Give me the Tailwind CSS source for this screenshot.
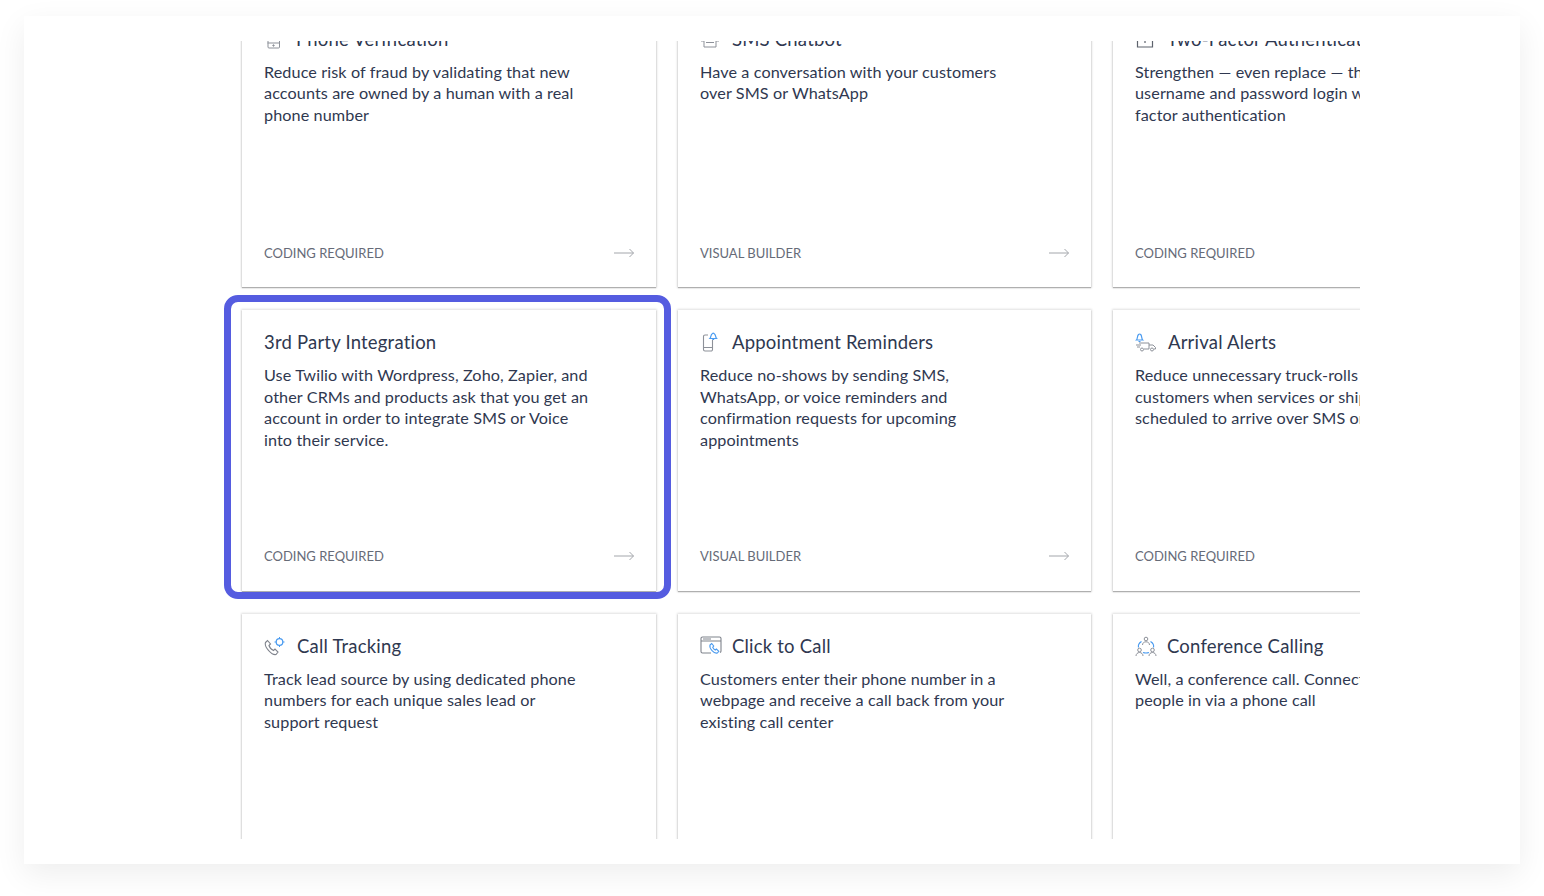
<!doctype html>
<html>
<head>
<meta charset="utf-8">
<script src="https://cdn.jsdelivr.net/npm/@tailwindcss/browser@4"></script>
</head>
<body class="bg-white">
<div class="w-[1544px] h-[896px] pt-4 pl-6 overflow-hidden bg-white font-['Lato',sans-serif] text-[#2f3850]">
  <div class="relative w-[1496px] h-[848px] bg-white pt-[25px] pl-[216px] shadow-[0_10px_30px_rgba(0,0,0,0.07)]">
    <div class="w-[1120px] h-[798px] overflow-hidden">
      <div class="grid grid-cols-[414px_413px_414px] gap-x-[22px] gap-y-[23px] w-[1300px] pl-[2px] pt-[4px] -mt-[38.5px]">

        <!-- Row 1 -->
        <article class="flex flex-col h-[280.5px] pt-[20px] px-[22px] bg-white shadow-[0_1px_1px_rgba(0,0,0,0.25),0_0_2px_1px_rgba(0,0,0,0.12)]">
          <div class="flex items-center gap-3 h-6">
            <svg class="w-5 h-5 shrink-0" viewBox="0 0 20 20" fill="none" stroke="#8d9199" stroke-width="1"><path d="M5 3h9a1.500 1.500 0 0 1 1.500 1.500V18a1 1 0 0 1-1 1h-9.500a1 1 0 0 1-1-1V4.500A1.500 1.500 0 0 1 5 3z"/><path d="M3.500 14h12"/><circle cx="9.500" cy="16.500" r=".7" fill="#8d9199"/></svg>
            <h3 class="text-[18.5px] leading-6 font-normal tracking-[0.2px] whitespace-nowrap">Phone Verification</h3>
          </div>
          <p class="mt-[10.250px] text-[16.2px] leading-[21.5px] tracking-[0.1px] whitespace-nowrap">Reduce risk of fraud by validating that new<br>accounts are owned by a human with a real<br>phone number</p>
          <div class="mt-auto mb-[24.500px] flex items-center justify-between">
            <span class="text-[13px] leading-5 text-[#666b78]">CODING REQUIRED</span>
            <svg class="w-5 h-2.5" viewBox="0 0 20 10" fill="none" stroke="#a3a6ab" stroke-width="1"><path d="M0 5h19.500M15.500 1l4 4-4 4"/></svg>
          </div>
        </article>
        <article class="flex flex-col h-[280.5px] pt-[20px] px-[22px] bg-white shadow-[0_1px_1px_rgba(0,0,0,0.25),0_0_2px_1px_rgba(0,0,0,0.12)]">
          <div class="flex items-center gap-3 h-6">
            <svg class="w-5 h-5 shrink-0" viewBox="0 0 20 20" fill="none" stroke="#8d9199" stroke-width="1"><path d="M4 6h12v12H4zM1 9h3M16 9h3M1 12h3M16 12h3"/><path d="M6 13.500h8"/><circle cx="7" cy="9.500" r="1"/><circle cx="13" cy="9.500" r="1"/></svg>
            <h3 class="text-[18.5px] leading-6 font-normal tracking-[0.2px] whitespace-nowrap">SMS Chatbot</h3>
          </div>
          <p class="mt-[10.250px] text-[16.2px] leading-[21.5px] tracking-[0.1px] whitespace-nowrap">Have a conversation with your customers<br>over SMS or WhatsApp</p>
          <div class="mt-auto mb-[24.500px] flex items-center justify-between">
            <span class="text-[13px] leading-5 text-[#666b78]">VISUAL BUILDER</span>
            <svg class="w-5 h-2.5" viewBox="0 0 20 10" fill="none" stroke="#a3a6ab" stroke-width="1"><path d="M0 5h19.500M15.500 1l4 4-4 4"/></svg>
          </div>
        </article>
        <article class="flex flex-col h-[280.5px] pt-[20px] px-[22px] bg-white shadow-[0_1px_1px_rgba(0,0,0,0.25),0_0_2px_1px_rgba(0,0,0,0.12)]">
          <div class="flex items-center gap-3 h-6">
            <svg class="w-5 h-5 shrink-0" viewBox="0 0 20 20" fill="none" stroke="#5d626c" stroke-width="1.200"><path d="M2.500 3h15v15h-15z"/><path d="M10 9v5M10 6.500v1"/></svg>
            <h3 class="text-[18.5px] leading-6 font-normal tracking-[0.2px] whitespace-nowrap">Two-Factor Authentication</h3>
          </div>
          <p class="mt-[10.250px] text-[16.2px] leading-[21.5px] tracking-[0.1px] whitespace-nowrap">Strengthen — even replace — the<br>username and password login with two-<br>factor authentication</p>
          <div class="mt-auto mb-[24.500px] flex items-center justify-between">
            <span class="text-[13px] leading-5 text-[#666b78]">CODING REQUIRED</span>
            <svg class="w-5 h-2.5" viewBox="0 0 20 10" fill="none" stroke="#a3a6ab" stroke-width="1"><path d="M0 5h19.500M15.500 1l4 4-4 4"/></svg>
          </div>
        </article>

        <!-- Row 2 -->
        <article class="flex flex-col h-[280.5px] pt-[20px] px-[22px] bg-white shadow-[0_1px_1px_rgba(0,0,0,0.25),0_0_2px_1px_rgba(0,0,0,0.12)]">
          <div class="flex items-center gap-3 h-6">
            <h3 class="text-[18.5px] leading-6 font-normal tracking-[0.2px] whitespace-nowrap">3rd Party Integration</h3>
          </div>
          <p class="mt-[10.250px] text-[16.2px] leading-[21.5px] tracking-[0.1px] whitespace-nowrap">Use Twilio with Wordpress, Zoho, Zapier, and<br>other CRMs and products ask that you get an<br>account in order to integrate SMS or Voice<br>into their service.</p>
          <div class="mt-auto mb-[24.500px] flex items-center justify-between">
            <span class="text-[13px] leading-5 text-[#666b78]">CODING REQUIRED</span>
            <svg class="w-5 h-2.5" viewBox="0 0 20 10" fill="none" stroke="#a3a6ab" stroke-width="1"><path d="M0 5h19.500M15.500 1l4 4-4 4"/></svg>
          </div>
        </article>
        <article class="flex flex-col h-[280.5px] pt-[20px] px-[22px] bg-white shadow-[0_1px_1px_rgba(0,0,0,0.25),0_0_2px_1px_rgba(0,0,0,0.12)]">
          <div class="flex items-center gap-3 h-6">
            <svg class="w-5 h-5 shrink-0" viewBox="0 0 20 20" fill="none"><path d="M8 3H5A1.500 1.500 0 0 0 3.500 4.500v13A1.500 1.500 0 0 0 5 19h6a1.500 1.500 0 0 0 1.500-1.500V8M3.500 15.500h9" stroke="#8d9199" stroke-width="1.100"/><path d="M10 6.500c1-1 .5-4 2.500-5 .5-.5 1-.5 1.500 0 2 1 1.500 4 2.500 5z" fill="#fff" stroke="#4a9bf0" stroke-width="1.200"/><path d="M12.300 7.500h1.900" stroke="#4a9bf0" stroke-width="1"/></svg>
            <h3 class="text-[18.5px] leading-6 font-normal tracking-[0.2px] whitespace-nowrap">Appointment Reminders</h3>
          </div>
          <p class="mt-[10.250px] text-[16.2px] leading-[21.5px] tracking-[0.1px] whitespace-nowrap">Reduce no-shows by sending SMS,<br>WhatsApp, or voice reminders and<br>confirmation requests for upcoming<br>appointments</p>
          <div class="mt-auto mb-[24.500px] flex items-center justify-between">
            <span class="text-[13px] leading-5 text-[#666b78]">VISUAL BUILDER</span>
            <svg class="w-5 h-2.5" viewBox="0 0 20 10" fill="none" stroke="#a3a6ab" stroke-width="1"><path d="M0 5h19.500M15.500 1l4 4-4 4"/></svg>
          </div>
        </article>
        <article class="flex flex-col h-[280.5px] pt-[20px] px-[22px] bg-white shadow-[0_1px_1px_rgba(0,0,0,0.25),0_0_2px_1px_rgba(0,0,0,0.12)]">
          <div class="flex items-center gap-[11px] h-6">
            <svg class="w-[22px] h-5 shrink-0" viewBox="0 0 22 20" fill="none"><path d="M1.500 8c1-.8.6-4 2-5.500.7-.7 1.500-.7 2.200 0C7 4 6.600 7.200 7.600 8z" stroke="#4a9bf0" stroke-width="1.200"/><path d="M3.500 9.500h2" stroke="#4a9bf0"/><path d="M4 11h10v6M14 13h4l2.500 2.500V17H19M9 17h5M1 13h5M2 15h3" stroke="#8d9199" stroke-width="1"/><circle cx="7" cy="17.500" r="1.500" stroke="#8d9199"/><circle cx="17" cy="17.500" r="1.500" stroke="#8d9199"/></svg>
            <h3 class="text-[18.5px] leading-6 font-normal tracking-[0.2px] whitespace-nowrap">Arrival Alerts</h3>
          </div>
          <p class="mt-[10.250px] text-[16.2px] leading-[21.5px] tracking-[0.1px] whitespace-nowrap">Reduce unnecessary truck-rolls by alerting<br>customers when services or shipments are<br>scheduled to arrive over SMS or voice</p>
          <div class="mt-auto mb-[24.500px] flex items-center justify-between">
            <span class="text-[13px] leading-5 text-[#666b78]">CODING REQUIRED</span>
            <svg class="w-5 h-2.5" viewBox="0 0 20 10" fill="none" stroke="#a3a6ab" stroke-width="1"><path d="M0 5h19.500M15.500 1l4 4-4 4"/></svg>
          </div>
        </article>

        <!-- Row 3 -->
        <article class="flex flex-col h-[280.5px] pt-[20px] px-[22px] bg-white shadow-[0_1px_1px_rgba(0,0,0,0.25),0_0_2px_1px_rgba(0,0,0,0.12)]">
          <div class="flex items-center gap-3 h-6">
            <svg class="w-[21px] h-5 shrink-0" viewBox="0 0 21 20" fill="none"><path d="M1.500 6.500l2-2 3 3.500-1.500 1.500c.5 2 2.500 4 4.500 5L11 13l3 3-2 2.500C8 19.500 0 11 1.500 6.500z" stroke="#7f838c" stroke-width="1.100"/><circle cx="15.500" cy="6" r="3.300" stroke="#4a9bf0" stroke-width="1.200"/><path d="M15.500 1v2M15.500 9v2M10.500 6h2M18.500 6h2" stroke="#4a9bf0" stroke-width="1"/></svg>
            <h3 class="text-[18.5px] leading-6 font-normal tracking-[0.2px] whitespace-nowrap">Call Tracking</h3>
          </div>
          <p class="mt-[10.250px] text-[16.2px] leading-[21.5px] tracking-[0.1px] whitespace-nowrap">Track lead source by using dedicated phone<br>numbers for each unique sales lead or<br>support request</p>
        </article>
        <article class="flex flex-col h-[280.5px] pt-[20px] px-[22px] bg-white shadow-[0_1px_1px_rgba(0,0,0,0.25),0_0_2px_1px_rgba(0,0,0,0.12)]">
          <div class="flex items-center gap-[10px] h-6">
            <svg class="w-[22px] h-5 shrink-0" viewBox="0 0 22 20" fill="none"><path d="M11 17H2.500A1.500 1.500 0 0 1 1 15.500v-13A1.500 1.500 0 0 1 2.500 1h17A1.500 1.500 0 0 1 21 2.500V15a1.500 1.500 0 0 1-1 1.500M1 5h20" stroke="#7f838c" stroke-width="1.100"/><path d="M3 3h8" stroke="#7f838c"/><path d="M10 9l1.700-1.500 2 2.500-1 1.300c.5 1.200 1.500 2.200 2.500 2.700l1.200-1 2.400 2.300-1.500 1.700C14 18 9 12.500 10 9z" fill="#fff" stroke="#4a9bf0" stroke-width="1.100"/></svg>
            <h3 class="text-[18.5px] leading-6 font-normal tracking-[0.2px] whitespace-nowrap">Click to Call</h3>
          </div>
          <p class="mt-[10.250px] text-[16.2px] leading-[21.5px] tracking-[0.1px] whitespace-nowrap">Customers enter their phone number in a<br>webpage and receive a call back from your<br>existing call center</p>
        </article>
        <article class="flex flex-col h-[280.5px] pt-[20px] px-[22px] bg-white shadow-[0_1px_1px_rgba(0,0,0,0.25),0_0_2px_1px_rgba(0,0,0,0.12)]">
          <div class="flex items-center gap-[10px] h-6">
            <svg class="w-[22px] h-5 shrink-0" viewBox="0 0 22 20" fill="none"><path d="M6.500 5.500C4 7 3 9.500 3.500 11.500M15.500 5.500c2.500 1.500 3.500 4 3 6M8 16.500c2 .7 4 .7 6 0" stroke="#4a9bf0" stroke-width="1.100"/><circle cx="11" cy="3" r="1.800" stroke="#8d9199"/><path d="M7.500 9c0-2 1.500-3.200 3.500-3.200s3.500 1.200 3.500 3.200" stroke="#8d9199"/><circle cx="4.500" cy="14" r="1.800" stroke="#8d9199"/><path d="M1 20c0-2 1.500-3.500 3.500-3.500S8 18 8 20" stroke="#8d9199"/><circle cx="17.500" cy="14" r="1.800" stroke="#8d9199"/><path d="M14 20c0-2 1.500-3.500 3.500-3.500S21 18 21 20" stroke="#8d9199"/></svg>
            <h3 class="text-[18.5px] leading-6 font-normal tracking-[0.2px] whitespace-nowrap">Conference Calling</h3>
          </div>
          <p class="mt-[10.250px] text-[16.2px] leading-[21.5px] tracking-[0.1px] whitespace-nowrap">Well, a conference call. Connect multiple<br>people in via a phone call</p>
        </article>
      </div>
    </div>
    <!-- highlight ring -->
    <div class="absolute left-[200px] top-[279px] w-[447px] h-[304px] rounded-[14px] border-[7px] border-[#555ce0] pointer-events-none"></div>
  </div>
</div>
</body>
</html>
